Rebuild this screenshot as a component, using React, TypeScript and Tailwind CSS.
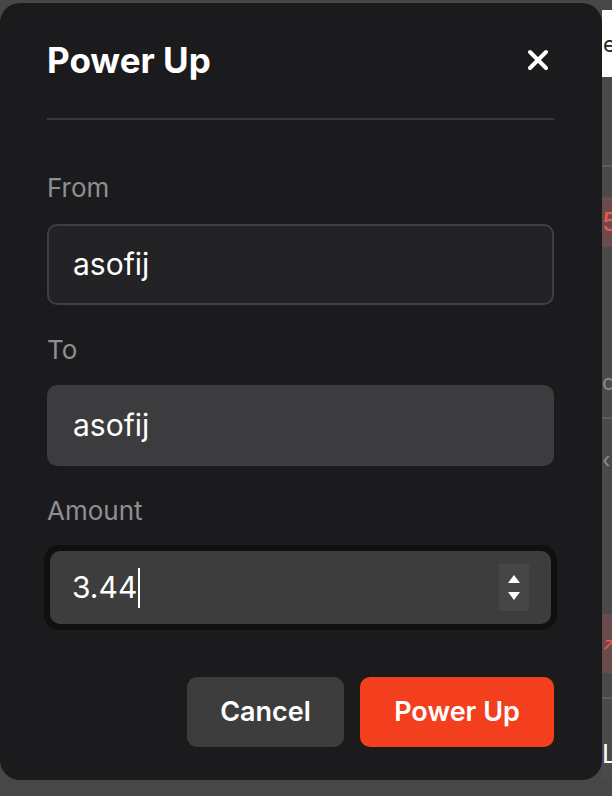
import { X } from 'lucide-react';

function Label({ children, className = '' }: { children: string; className?: string }) {
  return (
    <div className={`text-[26px] leading-[32px] text-[#8e8e93] ${className}`}>{children}</div>
  );
}

function Spinner() {
  return (
    <div className="w-[30px] h-[47px] bg-[#464646] flex flex-col items-center justify-center gap-[9px]">
      <svg width="12" height="8" viewBox="0 0 12 8">
        <path d="M6 0L12 8H0Z" fill="#ffffff" />
      </svg>
      <svg width="12" height="8" viewBox="0 0 12 8">
        <path d="M0 0H12L6 8Z" fill="#ffffff" />
      </svg>
    </div>
  );
}

// page behind the overlay, only a sliver shows on the right
function BackPage() {
  return (
    <div className="absolute inset-0 flex">
      <div className="w-[602px] shrink-0" />
      <div className="flex-1 overflow-hidden flex flex-col text-[22px] leading-none whitespace-nowrap">
        <div className="h-[10px]" />
        <div className="h-[67px] bg-white text-[#222] flex items-center pl-[1px]">e</div>
        <div className="h-[88px] bg-[#4a4a4a]" />
        <div className="h-[2px] bg-[#5c5c5c]" />
        <div className="h-[30px] bg-[#4a4a4a]" />
        <div className="h-[50px] bg-[#6a4c4c] text-[#f0584f] text-[26px] flex items-center">5(</div>
        <div className="h-[170px] bg-[#4a4a4a] text-[#8a8a8a] flex items-end pb-[24px]">c</div>
        <div className="h-[2px] bg-[#5c5c5c]" />
        <div className="h-[195px] bg-[#4a4a4a] text-[#8a8a8a] pt-[30px]">‹</div>
        <div className="h-[59px] bg-[#6a4c4c] text-[#f0584f] flex items-center text-[18px]">↗</div>
        <div className="h-[24px] bg-[#4a4a4a]" />
        <div className="h-[2px] bg-[#5c5c5c]" />
        <div className="h-[80px] bg-[#4a4a4a] text-white pt-[42px] text-[26px]">L</div>
        <div className="flex-1 bg-[#474747]" />
      </div>
    </div>
  );
}

export default function App() {
  return (
    <div
      className="relative w-[612px] h-[796px] bg-[#474747] overflow-hidden"
      style={{ fontFamily: 'Inter, "Noto Sans", sans-serif' }}
    >
      <BackPage />

      {/* Modal */}
      <div className="absolute left-0 top-[3px] w-[602px] h-[777px] rounded-[20px] bg-[#1b1b1d] pl-[47px] pr-[48px] pt-[36px] flex flex-col">
        {/* Header */}
        <div className="h-[42px] flex items-center justify-between">
          <h2 className="text-[35px] leading-[42px] font-bold text-white">Power Up</h2>
          <button className="w-[32px] h-[32px] flex items-center justify-center text-white">
            <X size={32} strokeWidth={3} />
          </button>
        </div>
        <div className="mt-[37px] h-[2px] bg-[#38383c]" />

        {/* From */}
        <Label className="mt-[52px]">From</Label>
        <div className="mt-[20px] h-[81px] rounded-[10px] border-2 border-[#3e3e43] bg-[#232326] flex items-center pl-[24px] text-[30px] text-white">
          asofij
        </div>

        {/* To */}
        <Label className="mt-[29px]">To</Label>
        <div className="mt-[19px] h-[81px] rounded-[10px] bg-[#3c3c3e] flex items-center pl-[26px] text-[30px] text-white">
          asofij
        </div>

        {/* Amount */}
        <Label className="mt-[29px]">Amount</Label>
        <div className="mt-[18px] -mx-[3px] h-[85px] rounded-[15px] bg-[#101011] p-[6px]">
          <div className="h-full rounded-[10px] bg-[#3d3d3d] flex items-center pl-[22px] pr-[22px]">
            <div className="flex items-center text-[30px] text-white">
              <span>3.44</span>
              <span className="w-[1.5px] h-[40px] bg-white ml-[1px]" />
            </div>
            <div className="ml-auto">
              <Spinner />
            </div>
          </div>
        </div>

        {/* Actions */}
        <div className="mt-[47px] flex justify-end gap-[16px]">
          <button className="h-[70px] w-[157px] rounded-[10px] bg-[#3d3d3d] text-white text-[27px] font-semibold">
            Cancel
          </button>
          <button className="h-[70px] w-[194px] rounded-[10px] bg-[#f43f1f] text-white text-[27px] font-semibold">
            Power Up
          </button>
        </div>
      </div>
    </div>
  );
}
